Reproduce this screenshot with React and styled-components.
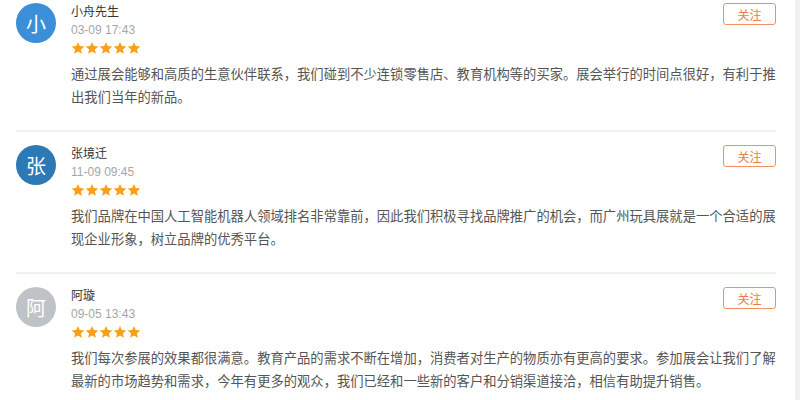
import React from "react";
import styled, { createGlobalStyle } from "styled-components";

const reviews = [
  {
    initial: "小",
    color: "#3a8fd8",
    name: "小舟先生",
    date: "03-09 17:43",
    text: "通过展会能够和高质的生意伙伴联系，我们碰到不少连锁零售店、教育机构等的买家。展会举行的时间点很好，有利于推出我们当年的新品。",
  },
  {
    initial: "张",
    color: "#2c79b6",
    name: "张境迁",
    date: "11-09 09:45",
    text: "我们品牌在中国人工智能机器人领域排名非常靠前，因此我们积极寻找品牌推广的机会，而广州玩具展就是一个合适的展现企业形象，树立品牌的优秀平台。",
  },
  {
    initial: "阿",
    color: "#bfc3c8",
    name: "阿璇",
    date: "09-05 13:43",
    text: "我们每次参展的效果都很满意。教育产品的需求不断在增加，消费者对生产的物质亦有更高的要求。参加展会让我们了解最新的市场趋势和需求，今年有更多的观众，我们已经和一些新的客户和分销渠道接洽，相信有助提升销售。",
  },
];

export default function App() {
  return (
    <>
      <GlobalStyle />
      <Page>
        <List>
          {reviews.map((r, i) => (
            <Item key={i} first={i === 0}>
              <Avatar bg={r.color}>{r.initial}</Avatar>
              <Body>
                <Head>
                  <Meta>
                    <Name>{r.name}</Name>
                    <Date>{r.date}</Date>
                  </Meta>
                  <FollowButton>关注</FollowButton>
                </Head>
                <Stars>
                  {[0, 1, 2, 3, 4].map((s) => (
                    <Star key={s} />
                  ))}
                </Stars>
                <Text>{r.text}</Text>
              </Body>
            </Item>
          ))}
        </List>
        <Gutter />
      </Page>
    </>
  );
}

function Star() {
  return (
    <svg width="14" height="14" viewBox="0 0 24 24">
      <polygon
        points="12,1.5 15.1,8.6 22.8,9.3 17,14.4 18.7,22 12,18 5.3,22 7,14.4 1.2,9.3 8.9,8.6"
        fill="#f7a01c"
      />
    </svg>
  );
}

const GlobalStyle = createGlobalStyle`
  html, body {
    margin: 0;
    padding: 0;
    background: #ffffff;
  }
  body {
    font-family: "Liberation Sans", "Noto Sans CJK SC", sans-serif;
  }
`;

const Page = styled.div`
  display: flex;
  width: 800px;
  height: 400px;
  overflow: hidden;
`;

const List = styled.div`
  flex: 1;
  padding: 2px 19px 0 16px;
`;

const Gutter = styled.div`
  width: 5px;
  background: #f1f1f1;
`;

const Item = styled.div`
  display: flex;
  gap: 15px;
  padding: ${(p) => (p.first ? "0" : "12px")} 0 21px;
  border-bottom: 2px solid #f0f0f0;
`;

const Avatar = styled.div`
  flex: none;
  width: 40px;
  height: 40px;
  margin-top: 1px;
  border-radius: 50%;
  background: ${(p) => p.bg};
  color: #ffffff;
  font-size: 20px;
  display: flex;
  align-items: center;
  justify-content: center;
`;

const Body = styled.div`
  flex: 1;
  min-width: 0;
`;

const Head = styled.div`
  display: flex;
  justify-content: space-between;
  align-items: flex-start;
`;

const Meta = styled.div`
  display: flex;
  flex-direction: column;
  gap: 2px;
  padding-top: 2px;
`;

const Name = styled.div`
  font-size: 12px;
  line-height: 16px;
  color: #333333;
`;

const Date = styled.div`
  font-size: 12px;
  line-height: 16px;
  color: #a6a6a6;
`;

const FollowButton = styled.button`
  width: 53px;
  height: 22px;
  margin-top: 1px;
  border: 1px solid #f2915f;
  border-radius: 3px;
  background: #ffffff;
  color: #f07a45;
  font-family: "Liberation Sans", "Noto Sans CJK SC", sans-serif;
  font-size: 12px;
  padding: 0;
  cursor: pointer;
`;

const Stars = styled.div`
  display: flex;
  margin-top: 3px;
  height: 14px;
`;

const Text = styled.p`
  margin: 8px -4px 0 0;
  font-size: 13.3px;
  line-height: 23px;
  color: #555555;
`;
